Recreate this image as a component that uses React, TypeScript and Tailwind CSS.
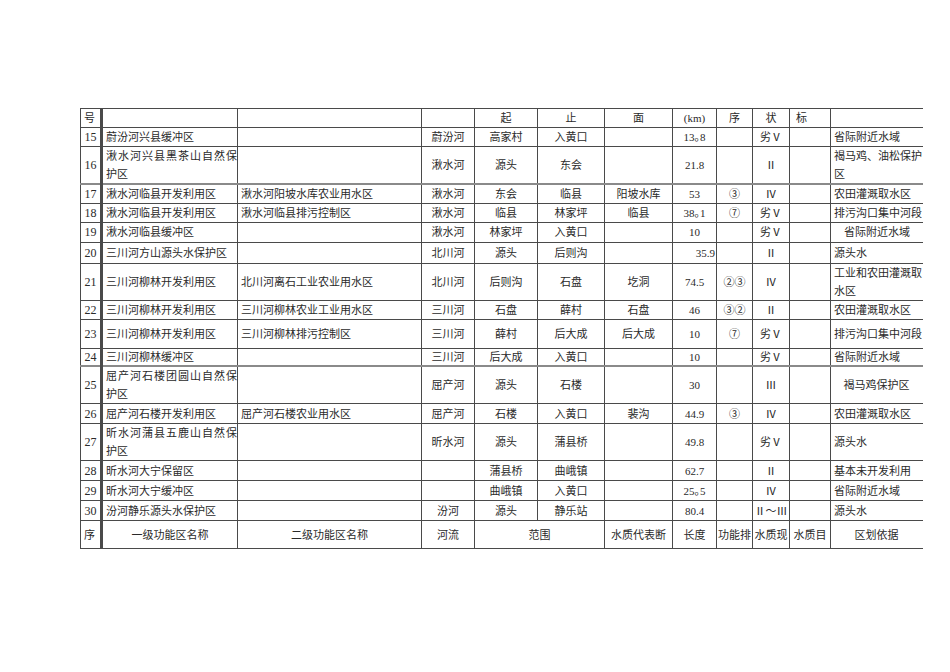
import React from "react";

type Row = {
  no: string;
  l1: React.ReactNode;
  l2: string;
  river: string;
  from: string;
  to: string;
  sec: string;
  km: string;
  kmAlign?: "center" | "right";
  seq: string;
  st: string;
  basis: React.ReactNode;
  basisAlign?: "left" | "indent" | "center";
  h: string;
  bb?: boolean;
};

const Wrap = ({ a, b }: { a: string; b: string }) => (
  <div className="leading-[18px]">
    <div className="tracking-[1px] whitespace-nowrap">{a}</div>
    <div>{b}</div>
  </div>
);

const BasisWrap = ({ a, b }: { a: string; b: string }) => (
  <div className="leading-[18px]">
    <div className="whitespace-nowrap">{a}</div>
    <div>{b}</div>
  </div>
);

const rows: Row[] = [
  { no: "15", l1: "蔚汾河兴县缓冲区", l2: "", river: "蔚汾河", from: "高家村", to: "入黄口", sec: "", km: "13｡8", seq: "", st: "劣Ⅴ", basis: "省际附近水域", h: "h-[19px]" },
  { no: "16", l1: <Wrap a="湫水河兴县黑茶山自然保" b="护区" />, l2: "", river: "湫水河", from: "源头", to: "东会", sec: "", km: "21.8", seq: "", st: "Ⅱ", basis: <BasisWrap a="褐马鸡、油松保护" b="区" />, h: "h-[37px]", bb: true },
  { no: "17", l1: "湫水河临县开发利用区", l2: "湫水河阳坡水库农业用水区", river: "湫水河", from: "东会", to: "临县", sec: "阳坡水库", km: "53", seq: "③", st: "Ⅳ", basis: "农田灌溉取水区", h: "h-[19px]" },
  { no: "18", l1: "湫水河临县开发利用区", l2: "湫水河临县排污控制区", river: "湫水河", from: "临县", to: "林家坪", sec: "临县", km: "38｡1", seq: "⑦", st: "劣Ⅴ", basis: "排污沟口集中河段", h: "h-[19px]" },
  { no: "19", l1: "湫水河临县缓冲区", l2: "", river: "湫水河", from: "林家坪", to: "入黄口", sec: "", km: "10", seq: "", st: "劣Ⅴ", basis: "省际附近水域", basisAlign: "indent", h: "h-[20px]" },
  { no: "20", l1: "三川河方山源头水保护区", l2: "", river: "北川河", from: "源头", to: "后则沟", sec: "", km: "35.9", kmAlign: "right", seq: "", st: "Ⅱ", basis: "源头水", h: "h-[21px]" },
  { no: "21", l1: "三川河柳林开发利用区", l2: "北川河离石工业农业用水区", river: "北川河", from: "后则沟", to: "石盘", sec: "圪洞", km: "74.5", seq: "②③", st: "Ⅳ", basis: <BasisWrap a="工业和农田灌溉取" b="水区" />, h: "h-[37px]" },
  { no: "22", l1: "三川河柳林开发利用区", l2: "三川河柳林农业工业用水区", river: "三川河", from: "石盘", to: "薛村", sec: "石盘", km: "46", seq: "③②", st: "Ⅱ", basis: "农田灌溉取水区", h: "h-[19px]" },
  { no: "23", l1: "三川河柳林开发利用区", l2: "三川河柳林排污控制区", river: "三川河", from: "薛村", to: "后大成", sec: "后大成", km: "10", seq: "⑦", st: "劣Ⅴ", basis: "排污沟口集中河段", h: "h-[29px]" },
  { no: "24", l1: "三川河柳林缓冲区", l2: "", river: "三川河", from: "后大成", to: "入黄口", sec: "", km: "10", seq: "", st: "劣Ⅴ", basis: "省际附近水域", h: "h-[18px]", bb: true },
  { no: "25", l1: <Wrap a="屈产河石楼团圆山自然保" b="护区" />, l2: "", river: "屈产河", from: "源头", to: "石楼", sec: "", km: "30", seq: "", st: "Ⅲ", basis: "褐马鸡保护区", basisAlign: "center", h: "h-[37px]" },
  { no: "26", l1: "屈产河石楼开发利用区", l2: "屈产河石楼农业用水区", river: "屈产河", from: "石楼", to: "入黄口", sec: "裴沟", km: "44.9", seq: "③", st: "Ⅳ", basis: "农田灌溉取水区", h: "h-[20px]" },
  { no: "27", l1: <Wrap a="昕水河蒲县五鹿山自然保" b="护区" />, l2: "", river: "昕水河", from: "源头", to: "蒲县桥", sec: "", km: "49.8", seq: "", st: "劣Ⅴ", basis: "源头水", h: "h-[37px]" },
  { no: "28", l1: "昕水河大宁保留区", l2: "", river: "", from: "蒲县桥", to: "曲峨镇", sec: "", km: "62.7", seq: "", st: "Ⅱ", basis: "基本未开发利用", h: "h-[20px]" },
  { no: "29", l1: "昕水河大宁缓冲区", l2: "", river: "", from: "曲峨镇", to: "入黄口", sec: "", km: "25｡5", seq: "", st: "Ⅳ", basis: "省际附近水域", h: "h-[20px]" },
  { no: "30", l1: "汾河静乐源头水保护区", l2: "", river: "汾河", from: "源头", to: "静乐站", sec: "", km: "80.4", seq: "", st: "Ⅱ～Ⅲ", basis: "源头水", h: "h-[20px]" },
];

const td = "border border-[#4a4a4a] p-0 align-middle overflow-hidden";
const c = `${td} text-center`;
const l = `${td} text-left pl-[3px]`;
const last = "border border-[#4a4a4a] border-r-transparent p-0 align-middle";
const first = "border border-[#4a4a4a] border-r-[3px] border-r-double p-0 align-middle text-center";

export default function App() {
  return (
    <div className="w-[950px] h-[672px] bg-white pt-[108px] pl-[80px] font-[family-name:'Liberation_Serif','Noto_Sans_CJK_SC',serif] text-[11px] leading-[16px] text-[#2a2a2a]">
      <table className="table-fixed border-collapse w-[842px]">
        <colgroup>
          <col className="w-[21px]" />
          <col className="w-[136px]" />
          <col className="w-[184px]" />
          <col className="w-[53px]" />
          <col className="w-[63px]" />
          <col className="w-[67px]" />
          <col className="w-[68px]" />
          <col className="w-[44px]" />
          <col className="w-[36px]" />
          <col className="w-[37px]" />
          <col className="w-[41px]" />
          <col className="w-[92px]" />
        </colgroup>
        <tbody>
          <tr className="h-[19px]">
            <td className={`${first} text-left pl-[3px]`}>号</td>
            <td className={l}></td>
            <td className={l}></td>
            <td className={c}></td>
            <td className={c}>起</td>
            <td className={c}>止</td>
            <td className={c}>面</td>
            <td className={c}>(km)</td>
            <td className={c}>序</td>
            <td className={c}>状</td>
            <td className={`${td} text-left pl-[6px]`}>标</td>
            <td className={last}></td>
          </tr>
          {rows.map((r) => {
            const bb = r.bb ? "border-b-2 border-b-[#8a8a8a]" : "";
            const basisCls =
              r.basisAlign === "center"
                ? `${last} text-center`
                : r.basisAlign === "indent"
                ? `${last} text-left pl-[13px]`
                : `${last} text-left pl-[3px]`;
            return (
              <tr key={r.no} className={r.h}>
                <td className={`${first} ${bb} text-[12px]`}>{r.no}</td>
                <td className={`${l} ${bb}`}>{r.l1}</td>
                <td className={`${l} ${bb} whitespace-nowrap`}>{r.l2}</td>
                <td className={`${c} ${bb}`}>{r.river}</td>
                <td className={`${c} ${bb}`}>{r.from}</td>
                <td className={`${c} ${bb}`}>{r.to}</td>
                <td className={`${c} ${bb}`}>{r.sec}</td>
                <td className={`${r.kmAlign === "right" ? `${td} text-right pr-[1px]` : c} ${bb}`}>{r.km}</td>
                <td className={`${c} ${bb}`}>{r.seq}</td>
                <td className={`${c} ${bb} whitespace-nowrap`}>{r.st}</td>
                <td className={`${c} ${bb}`}></td>
                <td className={`${basisCls} ${bb} whitespace-nowrap`}>{r.basis}</td>
              </tr>
            );
          })}
          <tr className="h-[28px]">
            <td className={`${first} text-left pl-[3px]`}>序</td>
            <td className={c}>一级功能区名称</td>
            <td className={c}>二级功能区名称</td>
            <td className={c}>河流</td>
            <td className={c} colSpan={2}>范围</td>
            <td className={`${c} whitespace-nowrap`}>水质代表断</td>
            <td className={c}>长度</td>
            <td className={`${c} whitespace-nowrap`}>功能排</td>
            <td className={`${c} whitespace-nowrap`}>水质现</td>
            <td className={`${c} whitespace-nowrap`}>水质目</td>
            <td className={`${last} text-center`}>区划依据</td>
          </tr>
        </tbody>
      </table>
    </div>
  );
}
